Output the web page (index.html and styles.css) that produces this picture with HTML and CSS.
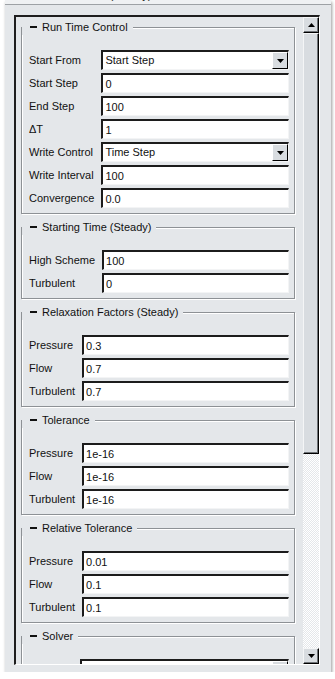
FILE: index.html
```html
<!DOCTYPE html>
<html lang="en">

<head>
    <meta charset="UTF-8">
    <meta name="viewport" content="width=device-width, initial-scale=1.0">
    <title>Solver Control</title>
    <link rel="stylesheet" href="styles.css">
</head>

<body>

    <div class="window">
        <div class="titlebar"><span class="titlebar-text">Solver Control (Steady)</span></div>

        <div class="frame">
            <div class="panel">

                <fieldset class="group">
                    <legend class="group-title">Run Time Control</legend>
                    <div class="rows">
                        <label class="row-label">Start From</label>
                        <div class="combo">
                            <span class="combo-value">Start Step</span>
                            <span class="combo-btn"><svg width="7" height="4" viewBox="0 0 7 4"><path d="M0 0h7L3.5 4z" fill="#000"/></svg></span>
                        </div>
                        <label class="row-label">Start Step</label>
                        <input class="field" type="text" value="0">
                        <label class="row-label">End Step</label>
                        <input class="field" type="text" value="100">
                        <label class="row-label">&Delta;T</label>
                        <input class="field" type="text" value="1">
                        <label class="row-label">Write Control</label>
                        <div class="combo">
                            <span class="combo-value">Time Step</span>
                            <span class="combo-btn"><svg width="7" height="4" viewBox="0 0 7 4"><path d="M0 0h7L3.5 4z" fill="#000"/></svg></span>
                        </div>
                        <label class="row-label">Write Interval</label>
                        <input class="field" type="text" value="100">
                        <label class="row-label">Convergence</label>
                        <input class="field" type="text" value="0.0">
                    </div>
                </fieldset>

                <fieldset class="group">
                    <legend class="group-title">Starting Time (Steady)</legend>
                    <div class="rows">
                        <label class="row-label">High Scheme</label>
                        <input class="field" type="text" value="100">
                        <label class="row-label">Turbulent</label>
                        <input class="field" type="text" value="0">
                    </div>
                </fieldset>

                <fieldset class="group">
                    <legend class="group-title">Relaxation Factors (Steady)</legend>
                    <div class="rows">
                        <label class="row-label">Pressure</label>
                        <input class="field" type="text" value="0.3">
                        <label class="row-label">Flow</label>
                        <input class="field" type="text" value="0.7">
                        <label class="row-label">Turbulent</label>
                        <input class="field" type="text" value="0.7">
                    </div>
                </fieldset>

                <fieldset class="group">
                    <legend class="group-title">Tolerance</legend>
                    <div class="rows">
                        <label class="row-label">Pressure</label>
                        <input class="field" type="text" value="1e-16">
                        <label class="row-label">Flow</label>
                        <input class="field" type="text" value="1e-16">
                        <label class="row-label">Turbulent</label>
                        <input class="field" type="text" value="1e-16">
                    </div>
                </fieldset>

                <fieldset class="group">
                    <legend class="group-title">Relative Tolerance</legend>
                    <div class="rows">
                        <label class="row-label">Pressure</label>
                        <input class="field" type="text" value="0.01">
                        <label class="row-label">Flow</label>
                        <input class="field" type="text" value="0.1">
                        <label class="row-label">Turbulent</label>
                        <input class="field" type="text" value="0.1">
                    </div>
                </fieldset>

                <fieldset class="group">
                    <legend class="group-title">Solver</legend>
                    <div class="rows">
                        <label class="row-label">Pressure</label>
                        <div class="combo">
                            <span class="combo-value">GAMG</span>
                            <span class="combo-btn"><svg width="7" height="4" viewBox="0 0 7 4"><path d="M0 0h7L3.5 4z" fill="#000"/></svg></span>
                        </div>
                    </div>
                </fieldset>

            </div>

            <div class="scrollbar">
                <div class="sb-btn"><svg width="7" height="4" viewBox="0 0 7 4"><path d="M0 4h7L3.5 0z" fill="#000"/></svg></div>
                <div class="sb-thumb"></div>
                <div class="sb-track"></div>
                <div class="sb-btn"><svg width="7" height="4" viewBox="0 0 7 4"><path d="M0 0h7L3.5 4z" fill="#000"/></svg></div>
            </div>
        </div>
    </div>

</body>

</html>
```

FILE: styles.css
```css
body {
    margin: 0;
    background: #fff;
    font-family: "Liberation Sans", Arial, sans-serif;
    font-size: 11px;
    color: #111;
}

.window {
    margin-left: 5px;
    width: 326px;
    height: 672px;
    background: #e4e7ea;
    box-shadow: 1px 2px 3px rgba(0, 0, 0, 0.4);
    display: flex;
    flex-direction: column;
}

/* only the bottom of the title shows above the panel */
.titlebar {
    height: 4px;
    overflow: hidden;
    background: #eff1f3;
    border-bottom: 1px solid #9da1a5;
    padding-left: 32px;
}

.titlebar-text {
    display: block;
    line-height: 13px;
    margin-top: -11px;
    white-space: nowrap;
}

.frame {
    flex: 1;
    display: flex;
    margin: 10px 11px 7px 9px;
    border-top: 2px solid #1e1e1e;
    border-left: 2px solid #1e1e1e;
    border-right: 1px solid #fff;
    border-bottom: 1px solid #fff;
    overflow: hidden;
}

.panel {
    flex: 1;
    min-width: 0;
    padding: 2px 8px 0 5px;
    overflow: hidden;
}

/* group boxes */
.group {
    margin: 0 0 5px;
    padding: 0;
    min-width: 0;
    border: 1px solid #8d9195;
    box-shadow: inset 1px 1px 0 #fff, 1px 1px 0 #fff;
}

.group-title {
    padding: 0 5px 0 8px;
    line-height: 16px;
    background: #e4e7ea;
}

.group-title::before {
    content: "";
    display: inline-block;
    width: 7px;
    height: 2px;
    background: #111;
    margin-right: 5px;
    vertical-align: middle;
    position: relative;
    top: -1px;
}

.rows {
    display: grid;
    grid-template-columns: auto 1fr;
    grid-auto-rows: 20px;
    column-gap: 7px;
    row-gap: 3px;
    align-items: center;
    padding: 15px 5px 5px 7px;
}

.row-label {
    white-space: nowrap;
}

.field {
    width: 100%;
    min-width: 0;
    height: 20px;
    box-sizing: border-box;
    margin: 0;
    padding: 1px 2px 0;
    font: inherit;
    color: #111;
    background: #fff;
    border-top: 2px solid #1c1c1c;
    border-left: 2px solid #1c1c1c;
    border-right: 1px solid #f3f4f5;
    border-bottom: 1px solid #f3f4f5;
    border-radius: 0;
    outline: none;
}

.combo {
    display: flex;
    align-items: flex-start;
    height: 20px;
    box-sizing: border-box;
    background: #fff;
    border-top: 2px solid #1c1c1c;
    border-left: 2px solid #1c1c1c;
    border-right: 1px solid #f3f4f5;
    border-bottom: 1px solid #f3f4f5;
}

.combo-value {
    flex: 1;
    padding: 2px 2px 0;
}

.combo-btn {
    width: 16px;
    height: 17px;
    box-sizing: border-box;
    background: #d8dce0;
    border-top: 1px solid #fff;
    border-left: 1px solid #fff;
    border-right: 1px solid #000;
    border-bottom: 1px solid #000;
    display: flex;
    align-items: center;
    justify-content: center;
}

/* scrollbar */
.scrollbar {
    width: 16px;
    display: flex;
    flex-direction: column;
}

.sb-btn,
.sb-thumb {
    box-sizing: border-box;
    background: #d8dce0;
    border-top: 1px solid #f4f5f6;
    border-left: 1px solid #f4f5f6;
    border-right: 1px solid #000;
    border-bottom: 1px solid #000;
    box-shadow: inset -1px -1px 0 #6f7377;
}

.sb-btn {
    height: 16px;
    display: flex;
    align-items: center;
    justify-content: center;
}

.sb-thumb {
    height: 421px;
}

.sb-track {
    flex: 1;
    background: repeating-conic-gradient(#fff 0 25%, #e4e7ea 0 50%) 0 0 / 2px 2px;
}
```
